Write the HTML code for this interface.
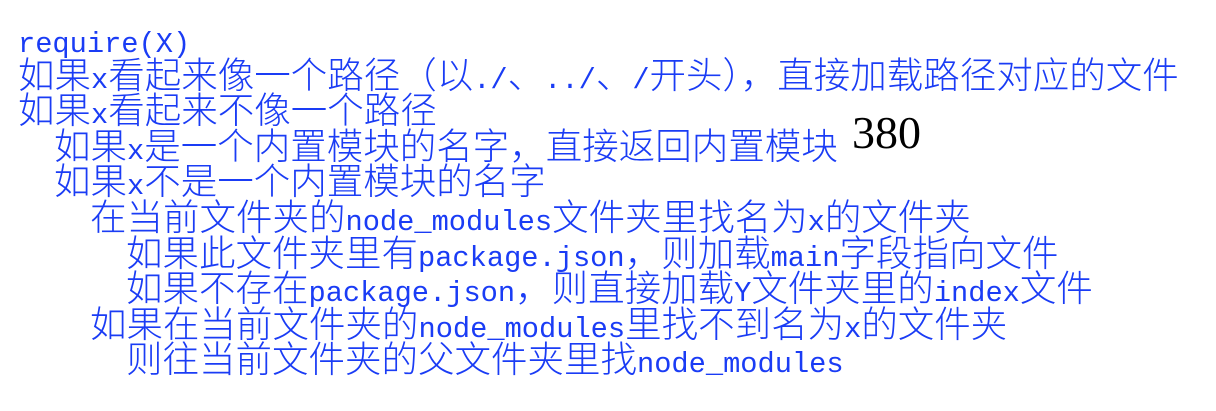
<!DOCTYPE html>
<html><head><meta charset="utf-8"><style>
body{margin:0;width:1216px;height:411px;background:#fff;overflow:hidden;position:relative}
.t{position:absolute;left:18px;top:19px;color:#1a3cf5;font-family:"Noto Sans CJK SC","WenQuanYi Zen Hei",sans-serif;font-size:36.5px;font-weight:300;white-space:nowrap}
.t div{height:35.6px;line-height:35.6px;overflow:visible}
.l{font-family:"Liberation Mono",monospace;font-size:28.7px;font-weight:400}
.n{position:absolute;left:852px;top:108px;font-family:"Liberation Serif",serif;font-size:46px;line-height:50px;color:#000}
</style></head><body>
<div class="t"><div><span class="l">require(X)</span></div><div>如果<span class="l">x</span>看起来像一个路径（以<span class="l">./</span>、<span class="l">../</span>、<span class="l">/</span>开头），直接加载路径对应的文件</div><div>如果<span class="l">x</span>看起来不像一个路径</div><div style="padding-left:36px">如果<span class="l">x</span>是一个内置模块的名字，直接返回内置模块</div><div style="padding-left:36px">如果<span class="l">x</span>不是一个内置模块的名字</div><div style="padding-left:72px">在当前文件夹的<span class="l">node_modules</span>文件夹里找名为<span class="l">x</span>的文件夹</div><div style="padding-left:108px">如果此文件夹里有<span class="l">package.json</span>，则加载<span class="l">main</span>字段指向文件</div><div style="padding-left:108px">如果不存在<span class="l">package.json</span>，则直接加载<span class="l">Y</span>文件夹里的<span class="l">index</span>文件</div><div style="padding-left:72px">如果在当前文件夹的<span class="l">node_modules</span>里找不到名为<span class="l">x</span>的文件夹</div><div style="padding-left:108px">则往当前文件夹的父文件夹里找<span class="l">node_modules</span></div></div>
<div class="n">380</div>
</body></html>
